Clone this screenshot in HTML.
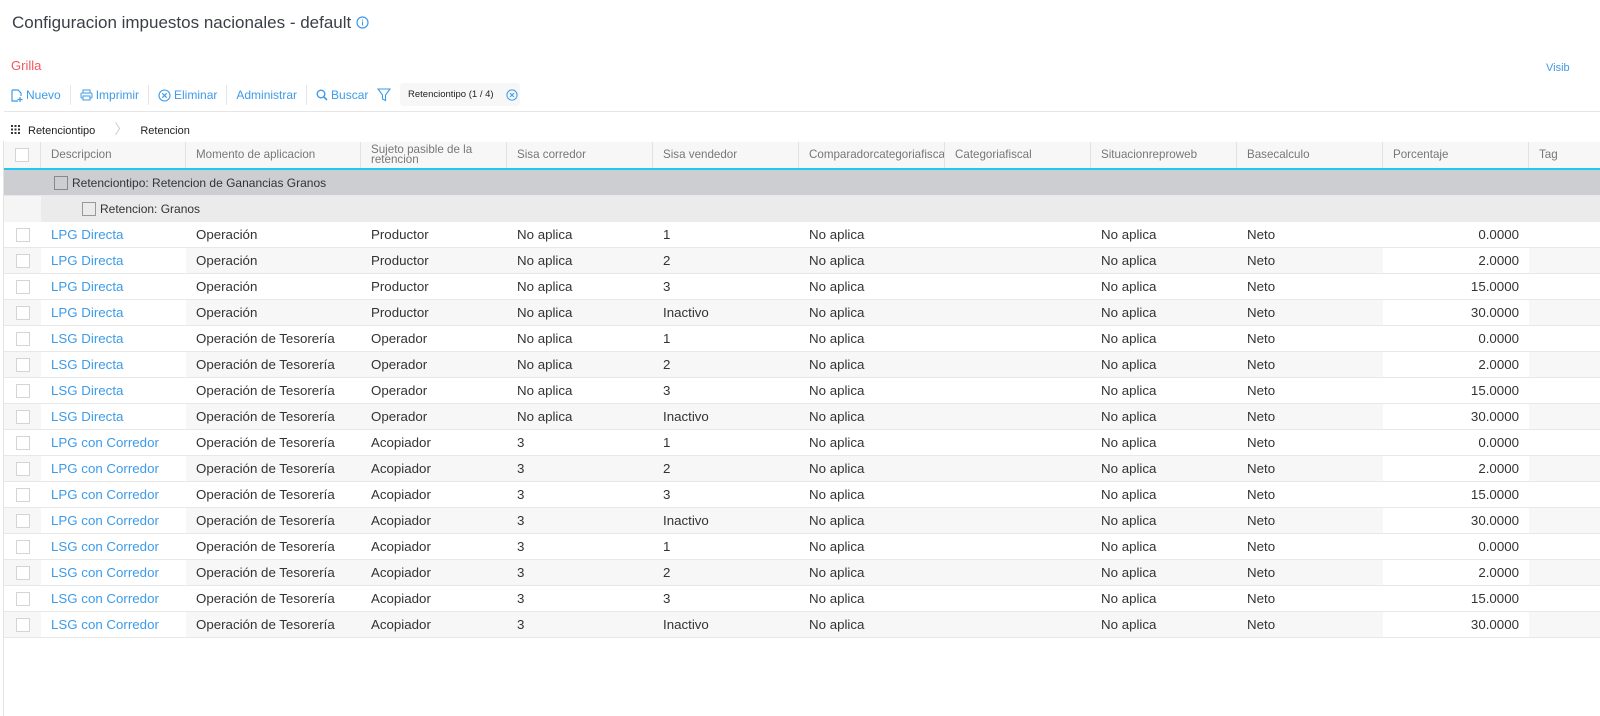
<!DOCTYPE html>
<html><head><meta charset="utf-8"><style>
*{box-sizing:border-box;margin:0;padding:0}
body{width:1600px;height:716px;overflow:hidden;background:#fff;font-family:"Liberation Sans",sans-serif;color:#333;position:relative}
.abs{position:absolute}
.title{left:12px;top:13px;font-size:17px;color:#3a3f47}
.grilla{left:11px;top:58px;font-size:13px;color:#f0585e}
.visib{left:1546px;top:62px;font-size:11px;color:#3d9be9}
.tb{top:86px;left:11px;height:18px;display:flex;align-items:center;font-size:12px;color:#3d9be9}
.tb span.i{display:flex;align-items:center;gap:3px}
.sep{width:1px;height:20px;background:#e6e6e6;margin:0 9px}
.chip{position:absolute;left:400px;top:83px;width:120px;height:23px;background:#f7f7f7;border-radius:3px;font-size:9.5px;color:#222;display:flex;align-items:center;padding-left:8px;white-space:nowrap}
.hline{left:4px;top:111px;width:1596px;height:1px;background:#e6e6e6}
.bc{top:119px;left:11px;font-size:11px;color:#222}
.vl{left:3px;top:141px;width:1px;height:575px;background:#e3e3e3}
.row{position:absolute;left:4px;width:1596px;display:flex;height:26px;align-items:center;border-bottom:1px solid #e8e8e8}
.c{height:100%;display:flex;align-items:center;padding-left:10px;font-size:13.3px;white-space:nowrap;overflow:hidden}
.w0{width:37px;justify-content:center;padding-left:0}.w1{width:145px}.w2{width:175px}.w3,.w4,.w5,.w6,.w7,.w8,.w9,.w10{width:146px}.w11{width:71px}
.cb{width:14px;height:14px;border:1px solid #d4d4d4;background:#fff}
.hd{top:142px;height:28px;background:#f7f7f7;border-bottom:2px solid #1ec8f0}
.hd .c{font-size:11.6px;color:#777;border-right:1px solid #e2e2e2;line-height:10px}
.g1{top:170px;background:#cdced1}
.g2{top:196px;background:#ebebeb;border:none}
.g1 .c,.g2 .c{font-size:12px}
.lnk{color:#3d9be9}
.r{justify-content:flex-end;padding-right:10px}
.e{background:#f7f7f7}.e .w1,.e .w10{background:#fff}
</style></head><body>
<div class="abs title">Configuracion impuestos nacionales - default <svg width="13" height="13" viewBox="0 0 13 13" style="vertical-align:-1px"><circle cx="6.5" cy="6.5" r="5.5" fill="none" stroke="#3d9be9" stroke-width="1.2"/><rect x="6" y="5.5" width="1.1" height="4" fill="#3d9be9"/><rect x="6" y="3.5" width="1.1" height="1.1" fill="#3d9be9"/></svg></div>
<div class="abs grilla">Grilla</div>
<div class="abs visib">Visib</div>
<div class="abs tb">
<span class="i"><svg width="12" height="13" viewBox="0 0 12 13"><path d="M1 1h6l3 3v3M1 1v11h6" fill="none" stroke="#3d9be9" stroke-width="1.2"/><path d="M9 8v5M6.5 10.5h5" stroke="#3d9be9" stroke-width="1.2"/></svg>Nuevo</span><span class="sep"></span>
<span class="i"><svg width="13" height="12" viewBox="0 0 13 12"><rect x="3" y="1" width="7" height="3" fill="none" stroke="#3d9be9"/><rect x="1" y="4" width="11" height="5" rx="1" fill="none" stroke="#3d9be9"/><rect x="3" y="7" width="7" height="4" fill="#fff" stroke="#3d9be9"/></svg>Imprimir</span><span class="sep"></span>
<span class="i"><svg width="13" height="13" viewBox="0 0 13 13"><circle cx="6.5" cy="6.5" r="5.5" fill="none" stroke="#3d9be9" stroke-width="1.1"/><path d="M4.3 4.3l4.4 4.4M8.7 4.3l-4.4 4.4" stroke="#3d9be9" stroke-width="1.1"/></svg>Eliminar</span><span class="sep"></span>
<span class="i">Administrar</span><span class="sep"></span>
<span class="i"><svg width="12" height="12" viewBox="0 0 12 12"><circle cx="5" cy="5" r="3.8" fill="none" stroke="#3d9be9" stroke-width="1.4"/><path d="M7.8 7.8l3.2 3.2" stroke="#3d9be9" stroke-width="1.6"/></svg>Buscar</span>
<svg style="margin-left:9px" width="14" height="14" viewBox="0 0 14 14"><path d="M1 1h12L8.5 7v5.5L5.5 11V7z" fill="none" stroke="#3d9be9" stroke-width="1.1"/></svg>
</div>
<div class="chip">Retenciontipo (1 / 4)<svg style="margin-left:12px" width="12" height="12" viewBox="0 0 13 13"><circle cx="6.5" cy="6.5" r="5.5" fill="none" stroke="#3d9be9" stroke-width="1.1"/><path d="M4.3 4.3l4.4 4.4M8.7 4.3l-4.4 4.4" stroke="#3d9be9" stroke-width="1.1"/></svg></div>
<div class="abs hline"></div>
<div class="abs bc"><svg width="9" height="9" viewBox="0 0 9 9" style="margin-right:8px;vertical-align:0"><g fill="#333"><rect x="0" y="0" width="2" height="2"/><rect x="3.5" y="0" width="2" height="2"/><rect x="7" y="0" width="2" height="2"/><rect x="0" y="3.5" width="2" height="2"/><rect x="3.5" y="3.5" width="2" height="2"/><rect x="7" y="3.5" width="2" height="2"/><rect x="0" y="7" width="2" height="2"/><rect x="3.5" y="7" width="2" height="2"/><rect x="7" y="7" width="2" height="2"/></g></svg>Retenciontipo <span style="color:#ccc;margin:0 12px 0 16px;font-size:14px">〉</span>Retencion</div>
<div class="abs vl"></div>
<div class="row hd"><div class="c w0"><span class="cb"></span></div><div class="c w1">Descripcion</div><div class="c w2">Momento de aplicacion</div><div class="c w3">Sujeto pasible de la<br>retencion</div><div class="c w4">Sisa corredor</div><div class="c w5">Sisa vendedor</div><div class="c w6">Comparadorcategoriafiscal</div><div class="c w7">Categoriafiscal</div><div class="c w8">Situacionreproweb</div><div class="c w9">Basecalculo</div><div class="c w10">Porcentaje</div><div class="c w11" style="border:none">Tag</div></div>
<div class="row g1"><div class="c" style="padding-left:50px;gap:4px"><span class="cb" style="background:#cdced1;border-color:#888"></span>Retenciontipo: Retencion de Ganancias Granos</div></div>
<div class="row g2"><div style="width:37px;height:100%;background:#f5f5f5"></div><div class="c" style="padding-left:41px;gap:4px"><span class="cb" style="background:#ebebeb;border-color:#999"></span>Retencion: Granos</div></div>
<div class="row" style="top:222px"><div class="c w0"><span class="cb"></span></div><div class="c w1 lnk">LPG Directa</div><div class="c w2">Operación</div><div class="c w3">Productor</div><div class="c w4">No aplica</div><div class="c w5">1</div><div class="c w6">No aplica</div><div class="c w7"></div><div class="c w8">No aplica</div><div class="c w9">Neto</div><div class="c w10 r">0.0000</div><div class="c w11"></div></div>
<div class="row e" style="top:248px"><div class="c w0"><span class="cb"></span></div><div class="c w1 lnk">LPG Directa</div><div class="c w2">Operación</div><div class="c w3">Productor</div><div class="c w4">No aplica</div><div class="c w5">2</div><div class="c w6">No aplica</div><div class="c w7"></div><div class="c w8">No aplica</div><div class="c w9">Neto</div><div class="c w10 r">2.0000</div><div class="c w11"></div></div>
<div class="row" style="top:274px"><div class="c w0"><span class="cb"></span></div><div class="c w1 lnk">LPG Directa</div><div class="c w2">Operación</div><div class="c w3">Productor</div><div class="c w4">No aplica</div><div class="c w5">3</div><div class="c w6">No aplica</div><div class="c w7"></div><div class="c w8">No aplica</div><div class="c w9">Neto</div><div class="c w10 r">15.0000</div><div class="c w11"></div></div>
<div class="row e" style="top:300px"><div class="c w0"><span class="cb"></span></div><div class="c w1 lnk">LPG Directa</div><div class="c w2">Operación</div><div class="c w3">Productor</div><div class="c w4">No aplica</div><div class="c w5">Inactivo</div><div class="c w6">No aplica</div><div class="c w7"></div><div class="c w8">No aplica</div><div class="c w9">Neto</div><div class="c w10 r">30.0000</div><div class="c w11"></div></div>
<div class="row" style="top:326px"><div class="c w0"><span class="cb"></span></div><div class="c w1 lnk">LSG Directa</div><div class="c w2">Operación de Tesorería</div><div class="c w3">Operador</div><div class="c w4">No aplica</div><div class="c w5">1</div><div class="c w6">No aplica</div><div class="c w7"></div><div class="c w8">No aplica</div><div class="c w9">Neto</div><div class="c w10 r">0.0000</div><div class="c w11"></div></div>
<div class="row e" style="top:352px"><div class="c w0"><span class="cb"></span></div><div class="c w1 lnk">LSG Directa</div><div class="c w2">Operación de Tesorería</div><div class="c w3">Operador</div><div class="c w4">No aplica</div><div class="c w5">2</div><div class="c w6">No aplica</div><div class="c w7"></div><div class="c w8">No aplica</div><div class="c w9">Neto</div><div class="c w10 r">2.0000</div><div class="c w11"></div></div>
<div class="row" style="top:378px"><div class="c w0"><span class="cb"></span></div><div class="c w1 lnk">LSG Directa</div><div class="c w2">Operación de Tesorería</div><div class="c w3">Operador</div><div class="c w4">No aplica</div><div class="c w5">3</div><div class="c w6">No aplica</div><div class="c w7"></div><div class="c w8">No aplica</div><div class="c w9">Neto</div><div class="c w10 r">15.0000</div><div class="c w11"></div></div>
<div class="row e" style="top:404px"><div class="c w0"><span class="cb"></span></div><div class="c w1 lnk">LSG Directa</div><div class="c w2">Operación de Tesorería</div><div class="c w3">Operador</div><div class="c w4">No aplica</div><div class="c w5">Inactivo</div><div class="c w6">No aplica</div><div class="c w7"></div><div class="c w8">No aplica</div><div class="c w9">Neto</div><div class="c w10 r">30.0000</div><div class="c w11"></div></div>
<div class="row" style="top:430px"><div class="c w0"><span class="cb"></span></div><div class="c w1 lnk">LPG con Corredor</div><div class="c w2">Operación de Tesorería</div><div class="c w3">Acopiador</div><div class="c w4">3</div><div class="c w5">1</div><div class="c w6">No aplica</div><div class="c w7"></div><div class="c w8">No aplica</div><div class="c w9">Neto</div><div class="c w10 r">0.0000</div><div class="c w11"></div></div>
<div class="row e" style="top:456px"><div class="c w0"><span class="cb"></span></div><div class="c w1 lnk">LPG con Corredor</div><div class="c w2">Operación de Tesorería</div><div class="c w3">Acopiador</div><div class="c w4">3</div><div class="c w5">2</div><div class="c w6">No aplica</div><div class="c w7"></div><div class="c w8">No aplica</div><div class="c w9">Neto</div><div class="c w10 r">2.0000</div><div class="c w11"></div></div>
<div class="row" style="top:482px"><div class="c w0"><span class="cb"></span></div><div class="c w1 lnk">LPG con Corredor</div><div class="c w2">Operación de Tesorería</div><div class="c w3">Acopiador</div><div class="c w4">3</div><div class="c w5">3</div><div class="c w6">No aplica</div><div class="c w7"></div><div class="c w8">No aplica</div><div class="c w9">Neto</div><div class="c w10 r">15.0000</div><div class="c w11"></div></div>
<div class="row e" style="top:508px"><div class="c w0"><span class="cb"></span></div><div class="c w1 lnk">LPG con Corredor</div><div class="c w2">Operación de Tesorería</div><div class="c w3">Acopiador</div><div class="c w4">3</div><div class="c w5">Inactivo</div><div class="c w6">No aplica</div><div class="c w7"></div><div class="c w8">No aplica</div><div class="c w9">Neto</div><div class="c w10 r">30.0000</div><div class="c w11"></div></div>
<div class="row" style="top:534px"><div class="c w0"><span class="cb"></span></div><div class="c w1 lnk">LSG con Corredor</div><div class="c w2">Operación de Tesorería</div><div class="c w3">Acopiador</div><div class="c w4">3</div><div class="c w5">1</div><div class="c w6">No aplica</div><div class="c w7"></div><div class="c w8">No aplica</div><div class="c w9">Neto</div><div class="c w10 r">0.0000</div><div class="c w11"></div></div>
<div class="row e" style="top:560px"><div class="c w0"><span class="cb"></span></div><div class="c w1 lnk">LSG con Corredor</div><div class="c w2">Operación de Tesorería</div><div class="c w3">Acopiador</div><div class="c w4">3</div><div class="c w5">2</div><div class="c w6">No aplica</div><div class="c w7"></div><div class="c w8">No aplica</div><div class="c w9">Neto</div><div class="c w10 r">2.0000</div><div class="c w11"></div></div>
<div class="row" style="top:586px"><div class="c w0"><span class="cb"></span></div><div class="c w1 lnk">LSG con Corredor</div><div class="c w2">Operación de Tesorería</div><div class="c w3">Acopiador</div><div class="c w4">3</div><div class="c w5">3</div><div class="c w6">No aplica</div><div class="c w7"></div><div class="c w8">No aplica</div><div class="c w9">Neto</div><div class="c w10 r">15.0000</div><div class="c w11"></div></div>
<div class="row e" style="top:612px"><div class="c w0"><span class="cb"></span></div><div class="c w1 lnk">LSG con Corredor</div><div class="c w2">Operación de Tesorería</div><div class="c w3">Acopiador</div><div class="c w4">3</div><div class="c w5">Inactivo</div><div class="c w6">No aplica</div><div class="c w7"></div><div class="c w8">No aplica</div><div class="c w9">Neto</div><div class="c w10 r">30.0000</div><div class="c w11"></div></div>
</body></html>
